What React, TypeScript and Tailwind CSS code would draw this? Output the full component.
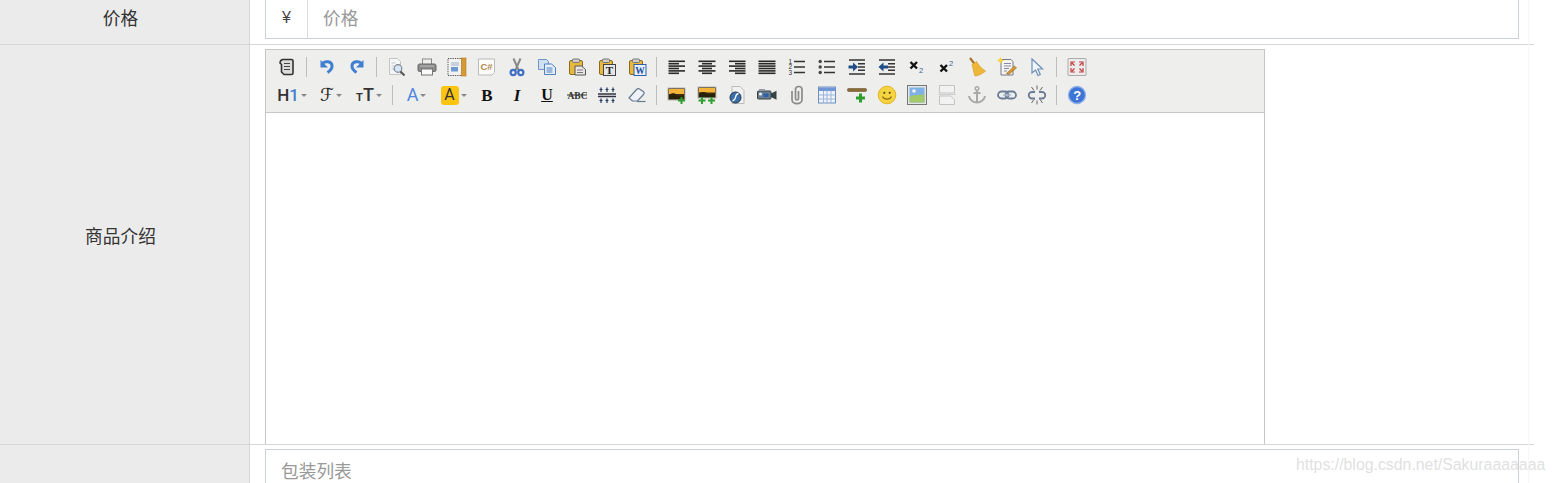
import React from "react";

const F = "font-['Noto_Sans_CJK_SC','Liberation_Sans',sans-serif]";

function I({ children }: { children: React.ReactNode }) {
  return (
    <svg width="20" height="20" viewBox="0 0 20 20" fill="none">
      {children}
    </svg>
  );
}
const Lines = ({ rows }: { rows: [number, number][] }) => (
  <I>
    {rows.map(([a, b], i) => (
      <rect key={i} x={a} y={3.5 + i * 2.4} width={b - a} height="1.6" fill="#2a2a2a" />
    ))}
  </I>
);
const Clip = ({ children }: { children?: React.ReactNode }) => (
  <>
    <rect x="2.5" y="3.5" width="13" height="14" rx="1.5" fill="#e8b93c" stroke="#8a6a20" />
    <rect x="5.5" y="2" width="7" height="3.5" rx="1" fill="#cfcfc8" stroke="#777" />
    {children}
  </>
);
const Plus = ({ x, y }: { x: number; y: number }) => (
  <path d={`M${x - 1} ${y - 3.5}h2v2.5h2.5v2h-2.5v2.5h-2v-2.5h-2.5v-2h2.5z`} fill="#2f9e2f" />
);

const icons: Record<string, React.ReactNode> = {
  source: (
    <I>
      <path d="M6 2.500h8.500c1 0 1.500.6 1.500 1.500v12c0 1-.7 1.500-1.500 1.500H7L4.500 15V7.500L3 6c.2-2 1.500-3.500 3-3.500z" fill="#ddd" stroke="#333" strokeWidth="1.600" />
      <path d="M7 6.500h6M7 9.500h6M7 12.500h6" stroke="#444" />
    </I>
  ),
  undo: (
    <I>
      <path d="M6 6C8 4 14.500 4 15 8.500c.3 3-1.500 5-4.500 7" stroke="#3f7fd0" strokeWidth="3" />
      <path d="M3.500 3v7.500H11z" fill="#3f7fd0" />
    </I>
  ),
  redo: (
    <I>
      <path d="M14 6C12 4 5.500 4 5 8.500c-.3 3 1.500 5 4.500 7" stroke="#3f7fd0" strokeWidth="3" />
      <path d="M16.500 3v7.500H9z" fill="#3f7fd0" />
    </I>
  ),
  preview: (
    <I>
      <path d="M2.500 1.500h8l3 3v13h-11z" fill="#f6f6f6" stroke="#c4c4c4" />
      <path d="M4.500 6h4M4.500 9h3M4.500 12h4" stroke="#bbc6d6" />
      <circle cx="11" cy="11.500" r="3.800" fill="#d5e5f5" stroke="#7b8794" strokeWidth="1.200" />
      <path d="M13.500 14.500l4 4" stroke="#555" strokeWidth="2" />
    </I>
  ),
  print: (
    <I>
      <rect x="5.500" y="2" width="9" height="5.500" fill="#eee" stroke="#888" />
      <rect x="1" y="7" width="18" height="7.500" rx="1.500" fill="#8b8b8b" stroke="#666" />
      <rect x="4.500" y="12" width="11" height="6" fill="#fafafa" stroke="#777" />
      <path d="M3 9h14" stroke="#bbb" />
    </I>
  ),
  template: (
    <I>
      <rect x="1" y="1.500" width="14" height="17" fill="#f2f2f2" stroke="#555" strokeDasharray="1.300 1" />
      <rect x="14.500" y="1" width="4.500" height="18" fill="#d59a36" stroke="#b5781a" strokeWidth=".6" />
      <path d="M4 6h8M4 8h8" stroke="#9fb0c4" />
      <rect x="4" y="10" width="7" height="4.500" fill="#6d9bd1" />
    </I>
  ),
  code: (
    <I>
      <path d="M1.500 2h16v13.500l-2.500 2.500H1.500z" fill="#fbfbf8" stroke="#bbb" />
      <text x="3.500" y="13" fontSize="9.500" fontWeight="700" fill="#b08a50" fontFamily="Liberation Sans">C#</text>
    </I>
  ),
  cut: (
    <I>
      <path d="M6.500 1.500l5 11.500M13.500 1.500l-5 11.500" stroke="#8a8a8a" strokeWidth="2" />
      <circle cx="6.200" cy="15.500" r="2.600" stroke="#3f6fc4" strokeWidth="2.200" />
      <circle cx="13.800" cy="15.500" r="2.600" stroke="#3f6fc4" strokeWidth="2.200" />
    </I>
  ),
  copy: (
    <I>
      <path d="M1.500 2.500h8l2 2v8h-10z" fill="#cfe0f5" stroke="#6f95c8" />
      <path d="M7.500 7h7l4 3.500v7h-11z" fill="#e6effa" stroke="#4f7fbf" />
      <path d="M9.500 11h6M9.500 13h6M9.500 15h6" stroke="#4f7fbf" />
    </I>
  ),
  paste: (
    <I>
      <Clip>
        <path d="M8 9h6.500l4 3.500V18H8z" fill="#e8e8e8" stroke="#555" />
        <path d="M10 13h6M10 15.500h6" stroke="#777" />
      </Clip>
    </I>
  ),
  pasteT: (
    <I>
      <Clip>
        <rect x="6.500" y="7.500" width="12" height="11" fill="#e6e6e6" stroke="#444" />
        <text x="8.800" y="16.800" fontSize="11" fontWeight="700" fill="#222" fontFamily="Liberation Serif">T</text>
      </Clip>
    </I>
  ),
  pasteW: (
    <I>
      <Clip>
        <rect x="7" y="7.500" width="12" height="11" fill="#e8f0fb" stroke="#2f5fa8" />
        <text x="8.300" y="16.800" fontSize="9.500" fontWeight="700" fill="#1f4f9f" fontFamily="Liberation Serif">W</text>
      </Clip>
    </I>
  ),
  left: <Lines rows={[[1.5, 18], [1.5, 12], [1.5, 18], [1.5, 12], [1.5, 18], [1.5, 12]]} />,
  center: <Lines rows={[[1.5, 18.5], [5, 15], [1.5, 18.5], [5, 15], [1.5, 18.5], [5, 15]]} />,
  right: <Lines rows={[[2, 18.5], [8, 18.5], [2, 18.5], [8, 18.5], [2, 18.5], [8, 18.5]]} />,
  justify: <Lines rows={[[1.5, 18.5], [1.5, 18.5], [1.5, 18.5], [1.5, 18.5], [1.5, 18.5], [1.5, 18.5]]} />,
  ol: (
    <I>
      <path d="M7 4.500h11M7 10h11M7 15.500h11" stroke="#333" strokeWidth="1.500" />
      <text x="1.500" y="6.500" fontSize="6.500" fill="#333" fontFamily="Liberation Sans">1</text>
      <text x="1.500" y="12" fontSize="6.500" fill="#333" fontFamily="Liberation Sans">2</text>
      <text x="1.500" y="17.500" fontSize="6.500" fill="#333" fontFamily="Liberation Sans">3</text>
    </I>
  ),
  ul: (
    <I>
      <path d="M7 4.500h11M7 10h11M7 15.500h11" stroke="#333" strokeWidth="1.500" />
      <circle cx="3.200" cy="4.500" r="1.700" fill="#444" />
      <circle cx="3.200" cy="10" r="1.700" fill="#444" />
      <circle cx="3.200" cy="15.500" r="1.700" fill="#444" />
    </I>
  ),
  indent: (
    <I>
      <path d="M2 3h16M11 6.800h7M11 10h7M11 13.200h7M2 17h16" stroke="#333" strokeWidth="1.500" />
      <path d="M1.500 8.500h4.500V5.500l5 4.500-5 4.500v-3H1.500z" fill="#1f4f86" />
    </I>
  ),
  outdent: (
    <I>
      <path d="M2 3h16M11 6.800h7M11 10h7M11 13.200h7M2 17h16" stroke="#333" strokeWidth="1.500" />
      <path d="M11 8.500H6.500V5.500L1.500 10l5 4.500v-3H11z" fill="#1f4f86" />
    </I>
  ),
  sub: (
    <I>
      <path d="M3.500 5l6.500 6.500M10 5l-6.500 6.500" stroke="#111" strokeWidth="2.400" />
      <text x="12" y="15.500" fontSize="7.500" fill="#3b5f9a" fontFamily="Liberation Sans">2</text>
    </I>
  ),
  sup: (
    <I>
      <path d="M3.500 8l6.500 6.500M10 8l-6.500 6.500" stroke="#111" strokeWidth="2.400" />
      <text x="12" y="8.500" fontSize="7.500" fill="#3b5f9a" fontFamily="Liberation Sans">2</text>
    </I>
  ),
  broom: (
    <I>
      <path d="M3 1l5 6.500" stroke="#a8742a" strokeWidth="2.200" />
      <path d="M5 7.500l4.500-3c2 3.500 5 7 9 9.500C15 17.500 10 19 8 19 6.500 15 6 11 5 7.500z" fill="#efb73a" stroke="#d79a20" strokeWidth=".6" />
    </I>
  ),
  edit: (
    <I>
      <path d="M4 2.500h10l2 2v13.500H4z" fill="#f4f4ee" stroke="#778" />
      <path d="M7 6.500h7M7 9h7M7 11.500h5M7 14h3" stroke="#88a" />
      <path d="M3.500 0l1.200 2.300 2.300 1.200-2.300 1.200-1.200 2.300-1.200-2.300L0 3.500l2.300-1.200z" fill="#f5d23e" />
      <path d="M9.500 16.500l8-7.500 2 2-8 6.500z" fill="#d99a32" stroke="#8a5a1a" strokeWidth=".6" />
    </I>
  ),
  cursor: (
    <I>
      <path d="M5 2v14l3.500-3 2.500 5.500 2.300-1-2.500-5.500H15.500z" fill="#f3f6fa" stroke="#6f8fb8" strokeWidth="1.200" />
    </I>
  ),
  full: (
    <I>
      <rect x="1" y="1.500" width="18" height="17" rx=".5" fill="#ececec" stroke="#aaa" />
      <path d="M5 6l2.500 2.500M15 6l-2.500 2.500M5 14l2.500-2.500M15 14l-2.500-2.500M4 9V5h4M16 9V5h-4M4 11v4h4M16 11v4h-4" stroke="#c43a3a" strokeWidth="1.200" />
    </I>
  ),
  bline: (
    <I>
      <text x="0.500" y="13.800" fontSize="9.500" fontWeight="700" fill="#333" fontFamily="Liberation Serif">ABC</text>
      <path d="M0 10h20" stroke="#333" />
    </I>
  ),
  hash: (
    <I>
      <path d="M1 9h18M1 11.500h18" stroke="#334" strokeWidth="1.300" />
      <path d="M4 2.500v4.500M2.500 4.500h3M10 2.500v4.500M8.500 4.500h3M16 2.500v4.500M14.500 4.500h3M4 13.500v4.500M2.500 15.500h3M10 13.500v4.500M8.500 15.500h3M16 13.500v4.500M14.500 15.500h3" stroke="#223a60" strokeWidth="1.200" />
    </I>
  ),
  eraser: (
    <I>
      <path d="M2 13l7.500-8.500c1-1 2.500-1 3.500-.2l3.500 2.500c.8.700.8 1.800 0 2.700l-6 6.500H5.500z" fill="#eef2f7" stroke="#667a90" strokeWidth="1.200" />
      <path d="M10 16.500h8.500" stroke="#667a90" strokeWidth="1.200" />
    </I>
  ),
  img: (
    <I>
      <rect x="1" y="3" width="17" height="12" fill="#40300f" stroke="#b5b5b5" />
      <rect x="2" y="4" width="15" height="5" fill="#f5b33a" />
      <path d="M2 10c3-2.500 6-2 8 0s4 1 7 0v4H2z" fill="#2a2208" />
      <Plus x={14.5} y={15.5} />
    </I>
  ),
  imgs: (
    <I>
      <rect x="1" y="2" width="18" height="11" fill="#40300f" stroke="#b5b5b5" />
      <rect x="2" y="3" width="16" height="4.500" fill="#f5b33a" />
      <path d="M2 8c3-1.500 6-1.500 8 0s4 1 8 0v4H2z" fill="#2a2208" />
      <Plus x={5} y={15.5} />
      <Plus x={14.5} y={15.5} />
    </I>
  ),
  flash: (
    <I>
      <path d="M5 1.500h8l4 4v13H5z" fill="#f2f2f2" stroke="#bbb" />
      <circle cx="8.500" cy="12.500" r="5.500" fill="#3a6ea8" stroke="#234" />
      <path d="M11.500 8.500c-2.500 0-2.500 2-3 4s-1 3-3 3.500" stroke="#fff" strokeWidth="1.300" />
    </I>
  ),
  video: (
    <I>
      <rect x="0.500" y="6" width="13.500" height="8" rx="1" fill="#6d7d90" stroke="#344" />
      <path d="M14 8.500l5.500-2.800v9L14 12z" fill="#344" />
      <circle cx="3.500" cy="9" r="1.600" fill="#e9eef5" />
      <rect x="6.500" y="8.500" width="5" height="3.500" fill="#2f5fa8" />
      <rect x="2" y="4" width="6" height="2" fill="#99a" />
    </I>
  ),
  clip: (
    <I>
      <path d="M5 6v8.500c0 5.500 10 5.500 10 0V4.500c0-4-6.500-4-6.500 0V13.500c0 2 3 2 3 0V6" stroke="#8a8a8a" strokeWidth="1.700" />
    </I>
  ),
  table: (
    <I>
      <rect x="1.500" y="2" width="17" height="16" fill="#eef3fb" stroke="#6f8fc0" />
      <rect x="2" y="2.500" width="16" height="3.500" fill="#6f97d5" />
      <path d="M2 10h16M2 14h16M6.500 6v12M10 6v12M14 6v12" stroke="#9db5d8" />
    </I>
  ),
  hr: (
    <I>
      <rect x="0.500" y="3.500" width="19" height="3" rx="1" fill="#8a6a35" stroke="#5a451f" strokeWidth=".5" />
      <path d="M12 8.500h3v3h3v3h-3v3h-3v-3H9v-3h3z" fill="#2f9e2f" />
    </I>
  ),
  smile: (
    <I>
      <circle cx="10" cy="10" r="8.800" fill="#f5d53f" stroke="#e3b22b" />
      <circle cx="7.300" cy="7.800" r="1.100" fill="#5a4a10" />
      <circle cx="12.700" cy="7.800" r="1.100" fill="#5a4a10" />
      <path d="M5.500 11.500c1.500 3.500 7.500 3.500 9 0" stroke="#8a6410" strokeWidth="1.100" />
    </I>
  ),
  image: (
    <I>
      <rect x="0.500" y="0.500" width="19" height="19" fill="#e6e6e6" stroke="#777" />
      <rect x="2.500" y="2.500" width="15" height="15" fill="#7fb0e6" />
      <path d="M2.500 12c4-3 8-1 15-3v8.500h-15z" fill="#a3c96b" />
      <circle cx="7" cy="6" r="1.800" fill="#f0f4fa" />
    </I>
  ),
  pagebreak: (
    <I>
      <path d="M2.500 0.500h15v7.500h-15zM2.500 11h11l4 3.500V19.500h-15z" fill="#f2f2f2" stroke="#c4c4c4" />
      <path d="M1 9.500h18" stroke="#d0d0d0" />
    </I>
  ),
  anchor: (
    <I>
      <circle cx="10" cy="3.500" r="1.800" stroke="#a8a8a8" strokeWidth="1.400" />
      <path d="M10 5.500v12M6.500 8h7" stroke="#a8a8a8" strokeWidth="2" />
      <path d="M2 11c.5 4 4.500 6.500 8 6.500s7.500-2.500 8-6.500" stroke="#a8a8a8" strokeWidth="2" />
    </I>
  ),
  link: (
    <I>
      <rect x="1" y="6.500" width="10.500" height="7" rx="3.500" stroke="#6b7d96" strokeWidth="1.800" />
      <rect x="8.500" y="6.500" width="10.500" height="7" rx="3.500" stroke="#6b7d96" strokeWidth="1.800" />
      <path d="M6 10h8" stroke="#a9b8cc" strokeWidth="1.500" />
    </I>
  ),
  unlink: (
    <I>
      <path d="M8 7H5a3 3 0 0 0 0 6.500h3M12 7h3a3 3 0 0 1 0 6.500h-3" stroke="#6b7d96" strokeWidth="1.800" />
      <path d="M10 0.500v4M4.500 2L7 5.500M15.500 2L13 5.500M10 15.500v4M4.500 18L7 14.500M15.500 18L13 14.500" stroke="#555" strokeWidth=".9" />
    </I>
  ),
  help: (
    <I>
      <circle cx="10" cy="10" r="8.500" fill="#3d74d6" stroke="#8fb0e8" strokeWidth="1.300" />
      <text x="6.300" y="14.500" fontSize="13" fontWeight="700" fill="#fff" fontFamily="Liberation Sans">?</text>
    </I>
  ),
};

const Sep = () => (
  <div className="flex h-[28px] w-[10px] items-center pl-[4px]">
    <div className="h-[20px] w-px bg-[#bdbdbd]" />
  </div>
);
const Btn = ({ n }: { n: string }) => (
  <div className="flex h-[28px] w-[30px] items-center justify-center">{icons[n]}</div>
);
const Row = ({ names }: { names: string[] }) => (
  <>
    {names.map((n, i) => (n === "|" ? <Sep key={i} /> : <Btn key={i} n={n} />))}
  </>
);
const Caret = () => (
  <span className="ml-[2px] mt-[1px] h-0 w-0 border-x-[3.5px] border-t-[3.5px] border-x-transparent border-t-[#888]" />
);
const Drop = ({ w, children }: { w: string; children: React.ReactNode }) => (
  <div className={`flex h-[28px] items-center justify-center font-['Roboto',sans-serif] ${w}`}>
    {children}
    <Caret />
  </div>
);
const T = ({ c, t }: { c: string; t: string }) => (
  <div className="flex h-[28px] w-[30px] items-center justify-center font-['Liberation_Serif',serif]">
    <span className={c}>{t}</span>
  </div>
);

export default function App() {
  return (
    <div className={`relative h-[483px] w-[1554px] overflow-hidden bg-white text-[17.7px] text-[#333] ${F}`}>
      <div className="w-[1534px]">
        {/* price row */}
        <div className="flex h-[45px] border-b border-[#d6d6d6]">
          <div className="flex w-[250px] items-center justify-center border-r border-[#d6d6d6] bg-[#ebebeb] pb-[9px] leading-none">
            <span className="relative left-[-4px]">价格</span>
          </div>
          <div className="flex-1 pl-[15px] pr-[15px]">
            <div className="flex h-[39px] border border-t-0 border-[#ccd0da]">
              <div className="flex w-[42px] items-center justify-center border-r border-[#dddddd] pb-[3px] text-[16px] text-[#444] font-['Liberation_Sans',sans-serif]">
                ¥
              </div>
              <div className="flex flex-1 items-center pb-[3px] pl-[15px] text-[#999]">价格</div>
            </div>
          </div>
        </div>
        {/* intro row */}
        <div className="flex h-[400px] border-b border-[#d6d6d6]">
          <div className="flex w-[250px] items-center justify-center border-r border-[#d6d6d6] bg-[#ebebeb] pb-[17px] leading-none">
            <span className="relative left-[-4px]">商品介绍</span>
          </div>
          <div className="h-full flex-1 overflow-hidden pl-[15px] pt-[4px]">
            <div className="h-[500px] w-[1000px] border border-b-0 border-[#c6c6c6]">
              <div className="h-[63px] border-b border-[#c6c6c4] bg-[#eeeeec] pl-[6px] pt-[3px]">
                <div className="flex h-[28px]">
                  <Row
                    names={["source", "|", "undo", "redo", "|", "preview", "print", "template", "code", "cut", "copy", "paste", "pasteT", "pasteW", "|", "left", "center", "right", "justify", "ol", "ul", "indent", "outdent", "sub", "sup", "broom", "edit", "cursor", "|", "full"]}
                  />
                </div>
                <div className="flex h-[28px]">
                  <Drop w="w-[40px]">
                    <span className="text-[17px] font-medium leading-none text-[#333]">
                      H<span className="text-[#3f7fd0]">1</span>
                    </span>
                  </Drop>
                  <Drop w="w-[38px]">
                    <span className="font-['DejaVu_Sans',serif] text-[18px] italic leading-none text-[#222]">ℱ</span>
                  </Drop>
                  <Drop w="w-[38px]">
                    <span className="text-[18px] font-medium leading-none text-[#333]">
                      <span className="text-[11px] font-bold">T</span>T
                    </span>
                  </Drop>
                  <Sep />
                  <Drop w="w-[37px]">
                    <span className="text-[18px] leading-none text-[#4f86e0]">A</span>
                  </Drop>
                  <Drop w="w-[37px]">
                    <span className="flex h-[19px] w-[18px] items-center justify-center rounded-[3px] bg-[#fdc412] text-[16px] leading-none text-[#333]">A</span>
                  </Drop>
                  <T t="B" c="text-[17px] font-black leading-none text-[#111]" />
                  <T t="I" c="text-[17px] font-bold italic leading-none text-[#111]" />
                  <T t="U" c="text-[16px] font-bold leading-none text-[#111] underline" />
                  <Row
                    names={["bline", "hash", "eraser", "|", "img", "imgs", "flash", "video", "clip", "table", "hr", "smile", "image", "pagebreak", "anchor", "link", "unlink", "|", "help"]}
                  />
                </div>
              </div>
            </div>
          </div>
        </div>
        {/* packing row */}
        <div className="flex h-[60px]">
          <div className="w-[250px] border-r border-[#d6d6d6] bg-[#ebebeb]" />
          <div className="flex-1 pl-[15px] pr-[15px] pt-[4px]">
            <div className="flex h-[60px] items-start border border-[#ccd0da] pl-[15px] pt-[6px] leading-[28px] text-[#999]">
              包装列表
            </div>
          </div>
        </div>
      </div>
      <div className="absolute left-[1528px] top-0 h-full w-px bg-[#f7f7f7]" />
      <div className="absolute left-[1296px] top-[455px] font-['Liberation_Sans',sans-serif] text-[15.85px] leading-[20px] text-[#d8d8d8]/80">
        https://blog.csdn.net/Sakuraaaaaaa
      </div>
    </div>
  );
}
